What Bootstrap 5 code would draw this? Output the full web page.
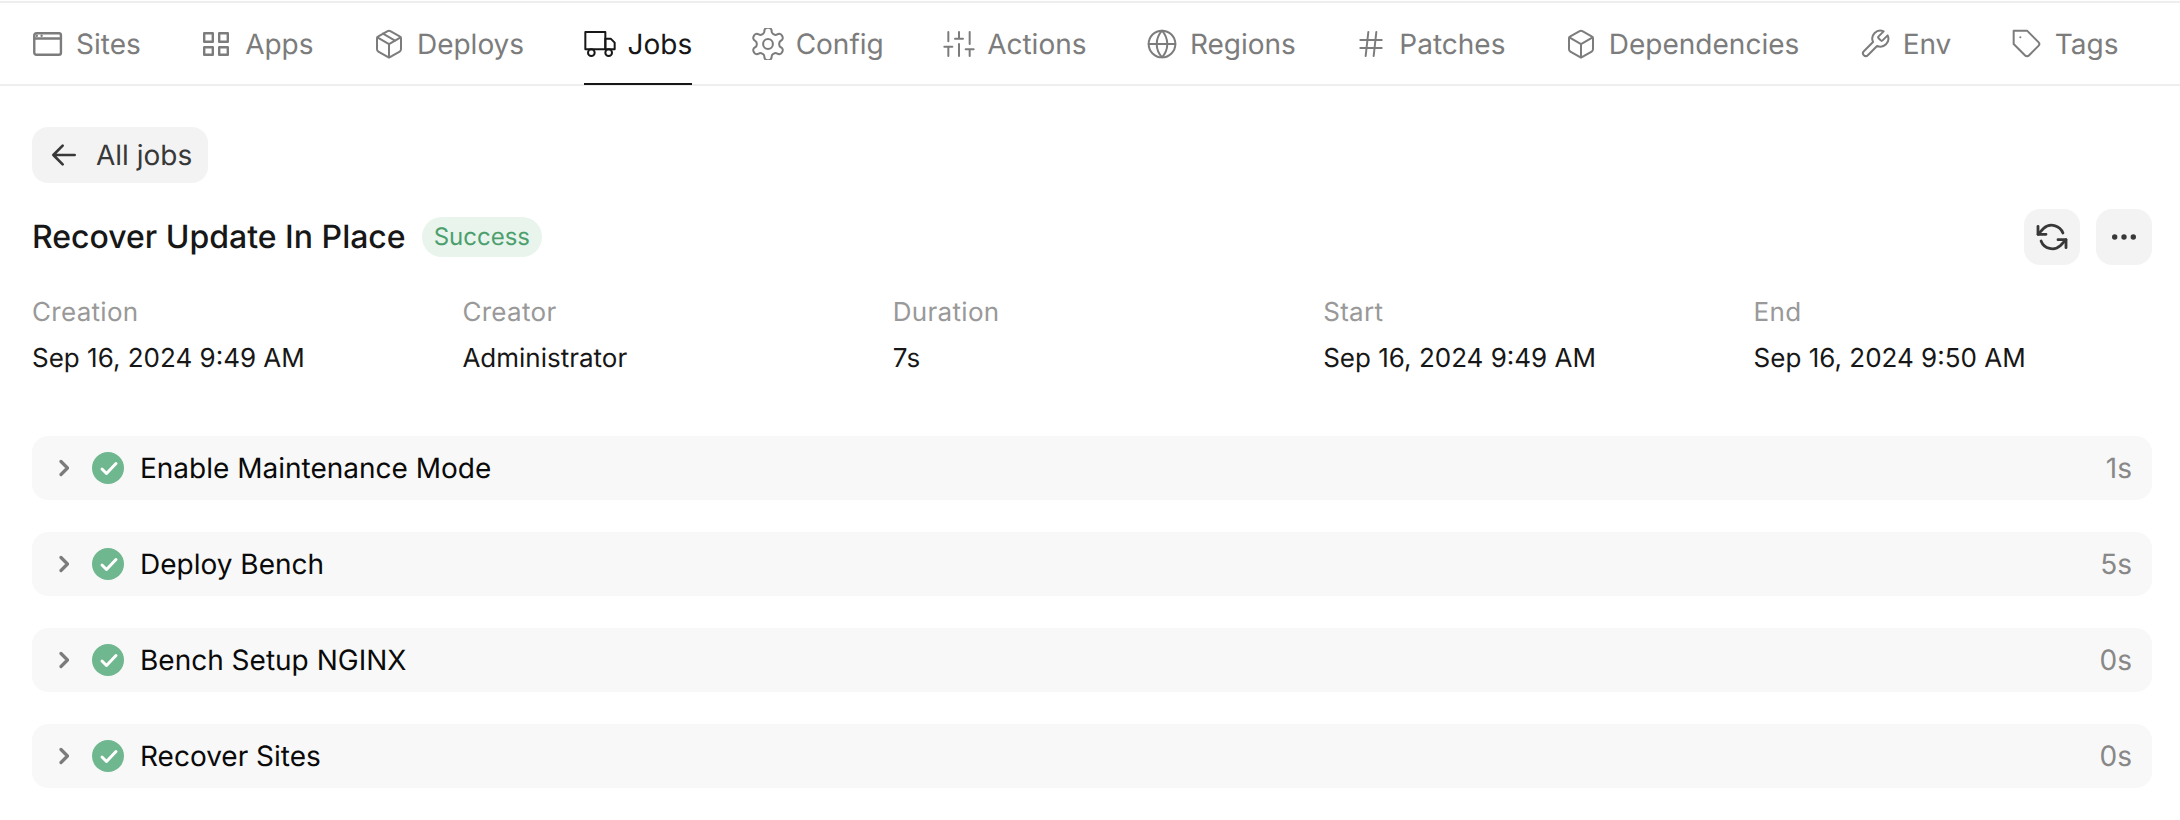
<!DOCTYPE html>
<html lang="en">
<head>
<meta charset="utf-8">
<title>Recover Update In Place</title>
<link href="https://cdn.jsdelivr.net/npm/bootstrap@5.3.0/dist/css/bootstrap.min.css" rel="stylesheet">
<style>
body{font-family:Inter,"Liberation Sans",sans-serif;background:#fff;color:#171717;font-size:28px;text-rendering:geometricPrecision}
.tabbar{border-top:2px solid #eee;border-bottom:2px solid #eee;margin-top:1px;height:85px;padding:0 32px;gap:59.4px;flex-wrap:nowrap}
.tab-item{color:#7c7c7c;font-size:28px;gap:12px;padding:0;height:81px;white-space:nowrap;border-bottom:2px solid transparent;margin-bottom:-2px;line-height:1}
.tab-item:first-child{margin-right:1px}
.tab-item svg{width:32px;height:32px;fill:none;stroke:currentColor;stroke-width:1.5;stroke-linecap:round;stroke-linejoin:round;flex:none}
.tab-item svg.icon-heavy{stroke-width:1.8}
.tab-item svg.icon-gear{stroke-width:1.25}
.tab-item.is-active{color:#171717;border-bottom-color:#171717}
.page-body{padding:41px 28px 0 32px}
.btn-soft{--bs-btn-bg:#f3f3f3;--bs-btn-hover-bg:#ebebeb;--bs-btn-active-bg:#ebebeb;--bs-btn-border-width:0;--bs-btn-color:#383838;--bs-btn-hover-color:#383838;--bs-btn-border-radius:16px;--bs-btn-font-size:28px;--bs-btn-padding-x:0;--bs-btn-padding-y:0;height:56px}
.btn-back{width:176px;gap:16.5px;padding-left:15.5px}
.btn-square{width:56px}
.btn-soft svg{fill:none;stroke:#383838;stroke-linecap:round;stroke-linejoin:round}
.head-row{margin-top:26px;height:56px}
.job-title{font-size:32px;font-weight:450;margin:0;line-height:1}
.status-pill{background:#e8f4ec;color:#4c9f6d;font-size:24px;font-weight:400;border-radius:20px;padding:0 12px;height:40px;margin-left:16px;line-height:40px}
.meta-grid{display:grid;grid-template-columns:repeat(5,1fr);gap:32px;margin-top:32px}
.meta-label{color:#999;font-size:26px;line-height:32px;letter-spacing:.3px}
.meta-value{color:#171717;font-size:26px;line-height:32px;margin-top:14px}
.step-list{margin-top:61px;gap:32px}
.step-row{height:64px;background:#f8f8f8;border-radius:16px;padding:0 20px 0 0}
.step-chev{width:10px;height:18px;margin-left:27px;fill:none;stroke:#7c7c7c;stroke-width:3.2;stroke-linecap:round;stroke-linejoin:round;flex:none}
.step-check{width:32px;height:32px;margin-left:23px;flex:none}
.step-name{margin-left:16px;color:#0a0a0a;font-size:28px}
.step-time{color:#888;font-size:28px}
</style>
</head>
<body>
<div class="nav tabbar align-items-center">
  <a class="tab-item d-flex align-items-center text-decoration-none"><svg class="icon-heavy" viewBox="0 0 24 24"><rect x="1.7" y="3.9" width="20" height="16.2" rx="1.5"/><path d="M1.7 7.9h20M3.6 5.8h.01M7.2 5.8h.01"/></svg>Sites</a>
  <a class="tab-item d-flex align-items-center text-decoration-none"><svg class="icon-heavy" viewBox="0 0 24 24"><rect x="2.4" y="3.9" width="6.45" height="6.45"/><rect x="13.65" y="3.9" width="6.45" height="6.45"/><rect x="13.65" y="14.4" width="6.45" height="5.7"/><rect x="2.4" y="14.4" width="6.45" height="5.7"/></svg>Apps</a>
  <a class="tab-item d-flex align-items-center text-decoration-none"><svg viewBox="0 0 24 24"><path d="M16.5 9.4 7.5 4.21"/><path d="M21 16V8a2 2 0 0 0-1-1.73l-7-4a2 2 0 0 0-2 0l-7 4A2 2 0 0 0 3 8v8a2 2 0 0 0 1 1.73l7 4a2 2 0 0 0 2 0l7-4A2 2 0 0 0 21 16z"/><path d="M3.27 6.96 12 12.01l8.73-5.05M12 22.08V12"/></svg>Deploys</a>
  <a class="tab-item is-active d-flex align-items-center text-decoration-none"><svg viewBox="0 0 24 24"><rect x="1" y="3" width="15" height="13"/><path d="M16 8h4l3 3v5h-7z"/><circle cx="5.5" cy="18.5" r="2.5"/><circle cx="18.5" cy="18.5" r="2.5"/></svg>Jobs</a>
  <a class="tab-item d-flex align-items-center text-decoration-none"><svg class="icon-gear" viewBox="2.5 2.2 19 19.6"><path d="M12.22 2h-.44a2 2 0 0 0-2 2v.18a2 2 0 0 1-1 1.73l-.43.25a2 2 0 0 1-2 0l-.15-.08a2 2 0 0 0-2.73.73l-.22.38a2 2 0 0 0 .73 2.73l.15.1a2 2 0 0 1 1 1.72v.51a2 2 0 0 1-1 1.74l-.15.09a2 2 0 0 0-.73 2.73l.22.38a2 2 0 0 0 2.73.73l.15-.08a2 2 0 0 1 2 0l.43.25a2 2 0 0 1 1 1.73V20a2 2 0 0 0 2 2h.44a2 2 0 0 0 2-2v-.18a2 2 0 0 1 1-1.73l.43-.25a2 2 0 0 1 2 0l.15.08a2 2 0 0 0 2.73-.73l.22-.39a2 2 0 0 0-.73-2.73l-.15-.08a2 2 0 0 1-1-1.74v-.5a2 2 0 0 1 1-1.74l.15-.09a2 2 0 0 0 .73-2.73l-.22-.38a2 2 0 0 0-2.73-.73l-.15.08a2 2 0 0 1-2 0l-.43-.25a2 2 0 0 1-1-1.73V4a2 2 0 0 0-2-2z"/><circle cx="12" cy="12" r="3"/></svg>Config</a>
  <a class="tab-item d-flex align-items-center text-decoration-none"><svg viewBox="0 0 24 24"><path d="M4 21v-7M4 10V3M12 21v-9M12 8V3M20 21v-5M20 12V3M1 14h6M9 8h6M17 16h6"/></svg>Actions</a>
  <a class="tab-item d-flex align-items-center text-decoration-none"><svg viewBox="0 0 24 24"><circle cx="12" cy="12" r="10"/><path d="M2 12h20M12 2a15.3 15.3 0 0 1 4 10 15.3 15.3 0 0 1-4 10 15.3 15.3 0 0 1-4-10 15.3 15.3 0 0 1 4-10z"/></svg>Regions</a>
  <a class="tab-item d-flex align-items-center text-decoration-none"><svg viewBox="0 0 24 24"><path d="M4 9h16M4 15h16M10 3 8 21M16 3l-2 18"/></svg>Patches</a>
  <a class="tab-item d-flex align-items-center text-decoration-none"><svg viewBox="0 0 24 24"><path d="M21 16V8a2 2 0 0 0-1-1.73l-7-4a2 2 0 0 0-2 0l-7 4A2 2 0 0 0 3 8v8a2 2 0 0 0 1 1.73l7 4a2 2 0 0 0 2 0l7-4A2 2 0 0 0 21 16z"/><path d="M3.27 6.96 12 12.01l8.73-5.05M12 22.08V12"/></svg>Dependencies</a>
  <a class="tab-item d-flex align-items-center text-decoration-none"><svg viewBox="0 0 24 24"><path d="M14.7 6.3a1 1 0 0 0 0 1.4l1.6 1.6a1 1 0 0 0 1.4 0l3.77-3.77a6 6 0 0 1-7.94 7.94l-6.91 6.91a2.12 2.12 0 0 1-3-3l6.91-6.91a6 6 0 0 1 7.94-7.94l-3.76 3.76z"/></svg>Env</a>
  <a class="tab-item d-flex align-items-center text-decoration-none"><svg viewBox="0 0 24 24"><path d="M20.59 13.41l-7.17 7.17a2 2 0 0 1-2.83 0L2 12V2h10l8.59 8.59a2 2 0 0 1 0 2.82z"/><path d="M7 7h.01"/></svg>Tags</a>
</div>
<main class="page-body">
  <a class="btn btn-soft btn-back d-inline-flex align-items-center"><svg width="32" height="32" viewBox="0 0 24 24" stroke-width="2"><path d="M20 12H4M11 5l-7 7 7 7"/></svg>All jobs</a>
  <div class="head-row d-flex align-items-center">
    <h1 class="job-title">Recover Update In Place</h1>
    <span class="badge status-pill">Success</span>
    <div class="ms-auto d-flex gap-3">
      <a class="btn btn-soft btn-square d-flex align-items-center justify-content-center"><svg width="32" height="32" viewBox="0 0 24 24" stroke-width="2.1"><path d="M1.5 4v6h6M22.5 20v-6h-6"/><path d="M20.2 9A9 9 0 0 0 5.6 5.6L1.5 10m21 4-4.1 4.4A9 9 0 0 1 3.8 15"/></svg></a>
      <a class="btn btn-soft btn-square d-flex align-items-center justify-content-center"><svg width="32" height="32" viewBox="0 0 32 32"><circle cx="6.7" cy="16" r="2.7" fill="#383838" stroke="none"/><circle cx="16" cy="16" r="2.7" fill="#383838" stroke="none"/><circle cx="25.3" cy="16" r="2.7" fill="#383838" stroke="none"/></svg></a>
    </div>
  </div>
  <div class="meta-grid">
    <div><div class="meta-label">Creation</div><div class="meta-value">Sep 16, 2024 9:49 AM</div></div>
    <div><div class="meta-label">Creator</div><div class="meta-value">Administrator</div></div>
    <div><div class="meta-label">Duration</div><div class="meta-value">7s</div></div>
    <div><div class="meta-label">Start</div><div class="meta-value">Sep 16, 2024 9:49 AM</div></div>
    <div><div class="meta-label">End</div><div class="meta-value">Sep 16, 2024 9:50 AM</div></div>
  </div>
  <div class="step-list d-flex flex-column">
    <div class="step-row d-flex align-items-center"><svg class="step-chev" viewBox="0 0 10 18"><path d="M2 2.5 8.5 9 2 15.5"/></svg><svg class="step-check" viewBox="0 0 32 32"><circle cx="16" cy="16" r="16" fill="#6fb78f"/><path d="M10 17l4.5 4.5 9.5-10" fill="none" stroke="#fff" stroke-width="3" stroke-linecap="round" stroke-linejoin="round"/></svg><span class="step-name">Enable Maintenance Mode</span><span class="step-time ms-auto">1s</span></div>
    <div class="step-row d-flex align-items-center"><svg class="step-chev" viewBox="0 0 10 18"><path d="M2 2.5 8.5 9 2 15.5"/></svg><svg class="step-check" viewBox="0 0 32 32"><circle cx="16" cy="16" r="16" fill="#6fb78f"/><path d="M10 17l4.5 4.5 9.5-10" fill="none" stroke="#fff" stroke-width="3" stroke-linecap="round" stroke-linejoin="round"/></svg><span class="step-name">Deploy Bench</span><span class="step-time ms-auto">5s</span></div>
    <div class="step-row d-flex align-items-center"><svg class="step-chev" viewBox="0 0 10 18"><path d="M2 2.5 8.5 9 2 15.5"/></svg><svg class="step-check" viewBox="0 0 32 32"><circle cx="16" cy="16" r="16" fill="#6fb78f"/><path d="M10 17l4.5 4.5 9.5-10" fill="none" stroke="#fff" stroke-width="3" stroke-linecap="round" stroke-linejoin="round"/></svg><span class="step-name">Bench Setup NGINX</span><span class="step-time ms-auto">0s</span></div>
    <div class="step-row d-flex align-items-center"><svg class="step-chev" viewBox="0 0 10 18"><path d="M2 2.5 8.5 9 2 15.5"/></svg><svg class="step-check" viewBox="0 0 32 32"><circle cx="16" cy="16" r="16" fill="#6fb78f"/><path d="M10 17l4.5 4.5 9.5-10" fill="none" stroke="#fff" stroke-width="3" stroke-linecap="round" stroke-linejoin="round"/></svg><span class="step-name">Recover Sites</span><span class="step-time ms-auto">0s</span></div>
  </div>
</main>
<script src="https://cdn.jsdelivr.net/npm/bootstrap@5.3.0/dist/js/bootstrap.bundle.min.js"></script>
</body>
</html>
